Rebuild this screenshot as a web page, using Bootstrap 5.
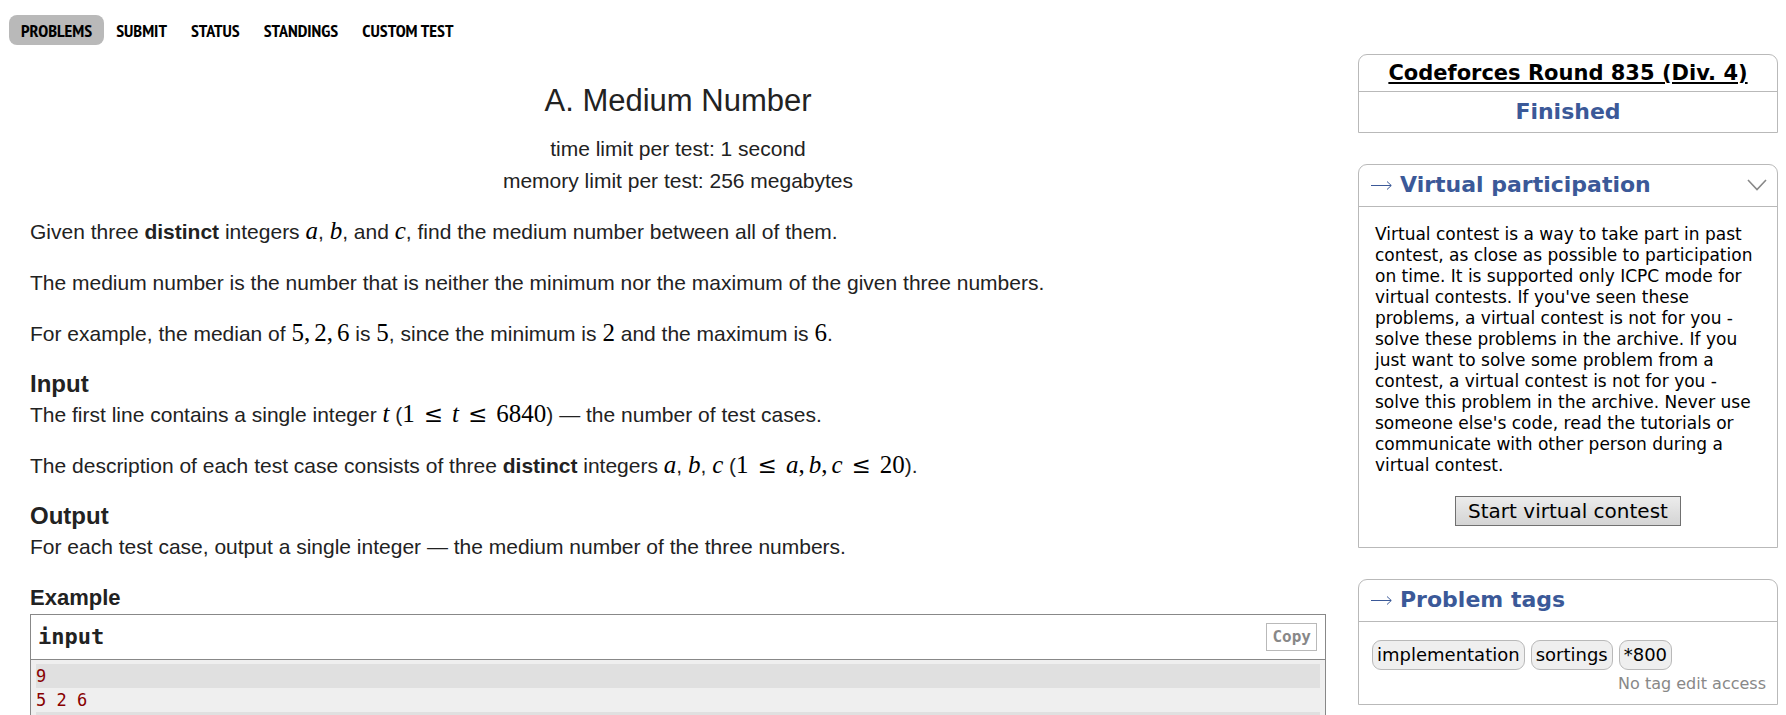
<!DOCTYPE html>
<html lang="en">
<head>
<meta charset="utf-8">
<meta name="viewport" content="width=device-width, initial-scale=1">
<title>Problem - A - Codeforces</title>
<link rel="stylesheet" href="https://cdn.jsdelivr.net/npm/bootstrap@5.3.0/dist/css/bootstrap.min.css">
<style>
body { font-family: "DejaVu Sans", sans-serif; color: #000; }
.page-shell { padding: 15px 8px 0 9px; }
.second-menu { font: bold 18px/28px "Liberation Sans Narrow", "PT Sans Narrow", "Open Sans Condensed", sans-serif; }
.second-menu .nav-link { color: #000; padding: 2px 12px 0; }
.second-menu .nav-link.active { background: #b9b9b9; border-radius: 8px; }
.column-wrap { gap: 32px; }
.statement { font: 21px/32px "Liberation Sans", sans-serif; color: #222; padding: 0 0 0 21px; }
.statement h1 { font-size: 31px; line-height: 48px; font-weight: 400; margin: 32px 0 8px; }
.limits { margin-bottom: 19px; }
.statement p { margin: 0 0 19px; }
.statement h2 { font-size: 24px; line-height: 30px; font-weight: 700; margin: 0; }
.statement h3 { font-size: 22px; line-height: 32px; font-weight: 700; margin: 0; }
.tex { font-family: "Liberation Serif", serif; font-size: 25px; line-height: 24px; color: #000; }
.rel { font-family: "DejaVu Serif", serif; font-size: 23px; line-height: 24px; margin: 0 9px; }
.sep { margin-right: 4px; }
.sample { border: 1px solid #888; }
.sample-title { font: bold 22px/44px "DejaVu Sans Mono", monospace; border-bottom: 1px solid #888; padding: 0 8px 0 7px; }
.btn-copy { font: bold 16px/26px "DejaVu Sans Mono", monospace; color: #888; border: 1px solid #b9b9b9; background: #fff; padding: 0 5px; }
.sample-data { font: 17px/24px "DejaVu Sans Mono", monospace; color: #800; background: #efefef; padding: 4px 5px; margin: 0; }
.sample-data div { min-height: 24px; }
.sample-data div:nth-child(odd) { background: #e0e0e0; }
.side-col { flex: 0 0 420px; padding-top: 9px; }
.side-box { border: 1px solid #b9b9b9; border-radius: 9px 9px 0 0; margin-bottom: 31px; }
.side-title { font-size: 22px; line-height: 24px; font-weight: 700; color: #3b5998; border-bottom: 1px solid #b9b9b9; padding: 8px 10px 9px 12px; margin: 0; }
.side-title svg { margin-right: 8px; flex: none; }
.contest-name { font-size: 21px; line-height: 36px; font-weight: 700; border-bottom: 1px solid #b9b9b9; }
.contest-name a { color: #000; }
.contest-state { font-size: 22px; line-height: 40px; font-weight: 700; color: #3b5998; }
.side-text { font-size: 17px; line-height: 21px; padding: 17px 24px 20px 16px; margin: 0; }
.btn-start { font-size: 20px; line-height: 28px; border: 1px solid #707070; background: linear-gradient(#ececec, #d4d4d4); padding: 0 12px; margin-bottom: 21px; color: #000; }
.tag-list { padding: 18px 13px 0; gap: 6px; }
.tag-box { font-size: 18px; line-height: 28px; border: 1px solid #b9b9b9; border-radius: 9px; background: #efefef; padding: 0 4px; }
.tag-note { font-size: 16px; line-height: 24px; color: #888; padding: 2px 11px 8px; }
</style>
</head>
<body class="vh-100 overflow-hidden">
<div class="page-shell">
  <nav class="second-menu nav" aria-label="Contest">
    <a class="nav-link active" href="#">PROBLEMS</a>
    <a class="nav-link" href="#">SUBMIT</a>
    <a class="nav-link" href="#">STATUS</a>
    <a class="nav-link" href="#">STANDINGS</a>
    <a class="nav-link" href="#">CUSTOM TEST</a>
  </nav>
  <div class="d-flex column-wrap">
    <main class="statement flex-grow-1">
      <header class="text-center">
        <h1>A. Medium Number</h1>
        <div>time limit per test: 1 second</div>
        <div class="limits">memory limit per test: 256 megabytes</div>
      </header>
      <p>Given three <b>distinct</b> integers <i class="tex">a</i>, <i class="tex">b</i>, and <i class="tex">c</i>, find the medium number between all of them.</p>
      <p>The medium number is the number that is neither the minimum nor the maximum of the given three numbers.</p>
      <p>For example, the median of <span class="tex">5<span class="sep">,</span>2<span class="sep">,</span>6</span> is <span class="tex">5</span>, since the minimum is <span class="tex">2</span> and the maximum is <span class="tex">6</span>.</p>
      <h2>Input</h2>
      <p>The first line contains a single integer <i class="tex">t</i> (<span class="tex">1<span class="rel">≤</span><i>t</i><span class="rel">≤</span>6840</span>) — the number of test cases.</p>
      <p>The description of each test case consists of three <b>distinct</b> integers <i class="tex">a</i>, <i class="tex">b</i>, <i class="tex">c</i> (<span class="tex">1<span class="rel">≤</span><i>a</i><span class="sep">,</span><i>b</i><span class="sep">,</span><i>c</i><span class="rel">≤</span>20</span>).</p>
      <h2>Output</h2>
      <p>For each test case, output a single integer — the medium number of the three numbers.</p>
      <h3>Example</h3>
      <div class="sample">
        <div class="sample-title d-flex justify-content-between align-items-center"><span>input</span><button type="button" class="btn-copy">Copy</button></div>
        <div class="sample-data"><div>9</div><div>5 2 6</div><div></div></div>
      </div>
    </main>
    <aside class="side-col">
      <section class="side-box text-center">
        <div class="contest-name"><a href="#">Codeforces Round 835 (Div. 4)</a></div>
        <div class="contest-state">Finished</div>
      </section>
      <section class="side-box">
        <h2 class="side-title d-flex align-items-center"><svg width="21" height="10" viewBox="0 0 21 10" fill="none" stroke="#3b5998" aria-hidden="true"><path d="M0 5.5H20M16 1.5L20.3 5.5L16 9.5"/></svg>Virtual participation<svg class="ms-auto me-0" width="20" height="12" viewBox="0 0 20 12" fill="none" stroke="#888" stroke-width="1.6" aria-hidden="true"><path d="M1 1L10 10.5L19 1"/></svg></h2>
        <p class="side-text">Virtual contest is a way to take part in past contest, as close as possible to participation on time. It is supported only ICPC mode for virtual contests. If you've seen these problems, a virtual contest is not for you - solve these problems in the archive. If you just want to solve some problem from a contest, a virtual contest is not for you - solve this problem in the archive. Never use someone else's code, read the tutorials or communicate with other person during a virtual contest.</p>
        <div class="text-center"><button type="button" class="btn-start">Start virtual contest</button></div>
      </section>
      <section class="side-box mb-0">
        <h2 class="side-title d-flex align-items-center"><svg width="21" height="10" viewBox="0 0 21 10" fill="none" stroke="#3b5998" aria-hidden="true"><path d="M0 5.5H20M16 1.5L20.3 5.5L16 9.5"/></svg>Problem tags</h2>
        <div class="tag-list d-flex flex-wrap"><span class="tag-box">implementation</span><span class="tag-box">sortings</span><span class="tag-box">*800</span></div>
        <div class="tag-note text-end">No tag edit access</div>
      </section>
    </aside>
  </div>
</div>
<script src="https://cdn.jsdelivr.net/npm/bootstrap@5.3.0/dist/js/bootstrap.bundle.min.js"></script>
</body>
</html>
